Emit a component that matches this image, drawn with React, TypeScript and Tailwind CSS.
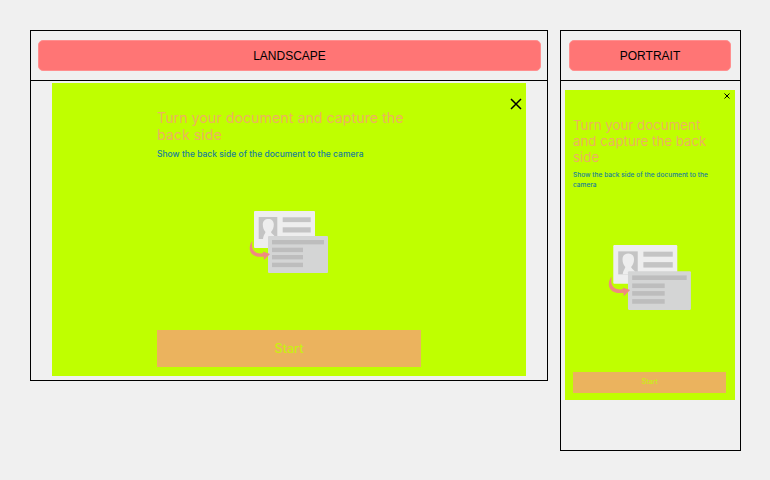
const DocIcon = ({ className }: { className: string }) => (
  <svg className={className} viewBox="0 0 82 66" fill="none" preserveAspectRatio="none">
    <rect x="6" y="2" width="61" height="37" rx="1" fill="#eeeeee" />
    <rect x="10.7" y="8" width="18.6" height="22" fill="#c4c4c4" />
    <path
      d="M15 30C15.5 26 17 25 17.5 23C15.5 21 14.8 18 14.8 15.5C14.8 12 17 10 20.3 10C23.6 10 25.8 12 25.8 15.5C25.8 18 25 21 23 23C23.5 25 27 26 28 30z"
      fill="#eeeeee"
    />
    <rect x="34.7" y="8.3" width="28" height="4.8" fill="#c4c4c4" />
    <rect x="34.7" y="18.3" width="28" height="5.2" fill="#c4c4c4" />
    <rect x="20" y="27" width="60" height="37" rx="1" fill="#d4d5d5" />
    <rect x="24" y="31" width="52" height="4.4" fill="#bdbdbd" />
    <rect x="24" y="38.7" width="31" height="4.4" fill="#bdbdbd" />
    <rect x="24" y="46" width="31" height="4.4" fill="#bdbdbd" />
    <rect x="24" y="53.7" width="31" height="4.4" fill="#bdbdbd" />
    <path d="M4.5 32C-1 38 1 50 16 47.5L16 44C7 46 2.5 41 4.5 32z" fill="#f08a80" />
    <path d="M15 42.5L22 45L16 51z" fill="#f08a80" />
  </svg>
);

const Label = ({ text, className }: { text: string; className: string }) => (
  <div className={`h-[50px] shrink-0 border-b border-black pt-[9px] ${className}`}>
    <div className="flex h-[31px] items-center justify-center rounded-[5px] border border-[#ff8f8f] bg-[#ff7575] font-['Liberation_Sans',sans-serif] text-[12px] text-black">
      {text}
    </div>
  </div>
);

const CloseIcon = ({ className, width }: { className: string; width: string }) => (
  <svg className={className} viewBox="0 0 12 12" stroke="#000" strokeWidth={width}>
    <path d="M1 1l10 10M11 1L1 11" />
  </svg>
);

export default function App() {
  return (
    <div className="flex h-[480px] w-[770px] items-start gap-3 bg-[#f0f0f0] pl-[30px] pt-[30px] font-['Inter',sans-serif]">
      {/* Landscape */}
      <div className="flex h-[351px] w-[518px] flex-col border border-black">
        <Label text="LANDSCAPE" className="pl-[7px] pr-[6px]" />
        <div className="pl-[21px] pt-[2px]">
          <div className="relative flex h-[293px] w-[474px] flex-col bg-[#bfff00] pl-[105px] pt-[26px]">
            <CloseIcon width="1.5" className="absolute right-[4px] top-[15px] h-[12px] w-[12px]" />
            <h1 className="w-[264px] text-[14.25px] leading-[17px] text-[#edb25f]">
              Turn your document and capture the back side
            </h1>
            <p className="mt-[5px] w-[264px] text-[8.5px] font-medium leading-[13px] text-[#17809a]">
              Show the back side of the document to the camera
            </p>
            <DocIcon className="ml-[91px] mt-[48px] h-[66px] w-[82px]" />
            <button className="mt-[55px] h-[37px] w-[264px] bg-[#ebb35e] pt-[1px] text-[12.5px] font-medium text-[#c9ef10]">
              Start
            </button>
          </div>
        </div>
      </div>

      {/* Portrait */}
      <div className="flex h-[421px] w-[181px] flex-col border border-black">
        <Label text="PORTRAIT" className="pl-2 pr-[9px]" />
        <div className="pl-1 pt-[9px]">
          <div className="relative flex h-[310px] w-[170px] flex-col bg-[#bfff00] px-2 pt-[27px]">
            <CloseIcon width="2" className="absolute right-[5px] top-[3px] h-[6px] w-[6px]" />
            <h1 className="text-[13.3px] leading-[16px] text-[#edb25f]">
              Turn your document and capture the back side
            </h1>
            <p className="mt-[5px] text-[6.6px] font-medium leading-[10px] text-[#17809a]">
              Show the back side of the document to the camera
            </p>
            <DocIcon className="ml-[34px] mt-[53px] h-[69px] w-[86px]" />
            <button className="mt-[60px] h-[21px] w-[153px] bg-[#ebb35e] text-[7px] font-medium text-[#c9ef10]">
              Start
            </button>
          </div>
        </div>
      </div>
    </div>
  );
}
